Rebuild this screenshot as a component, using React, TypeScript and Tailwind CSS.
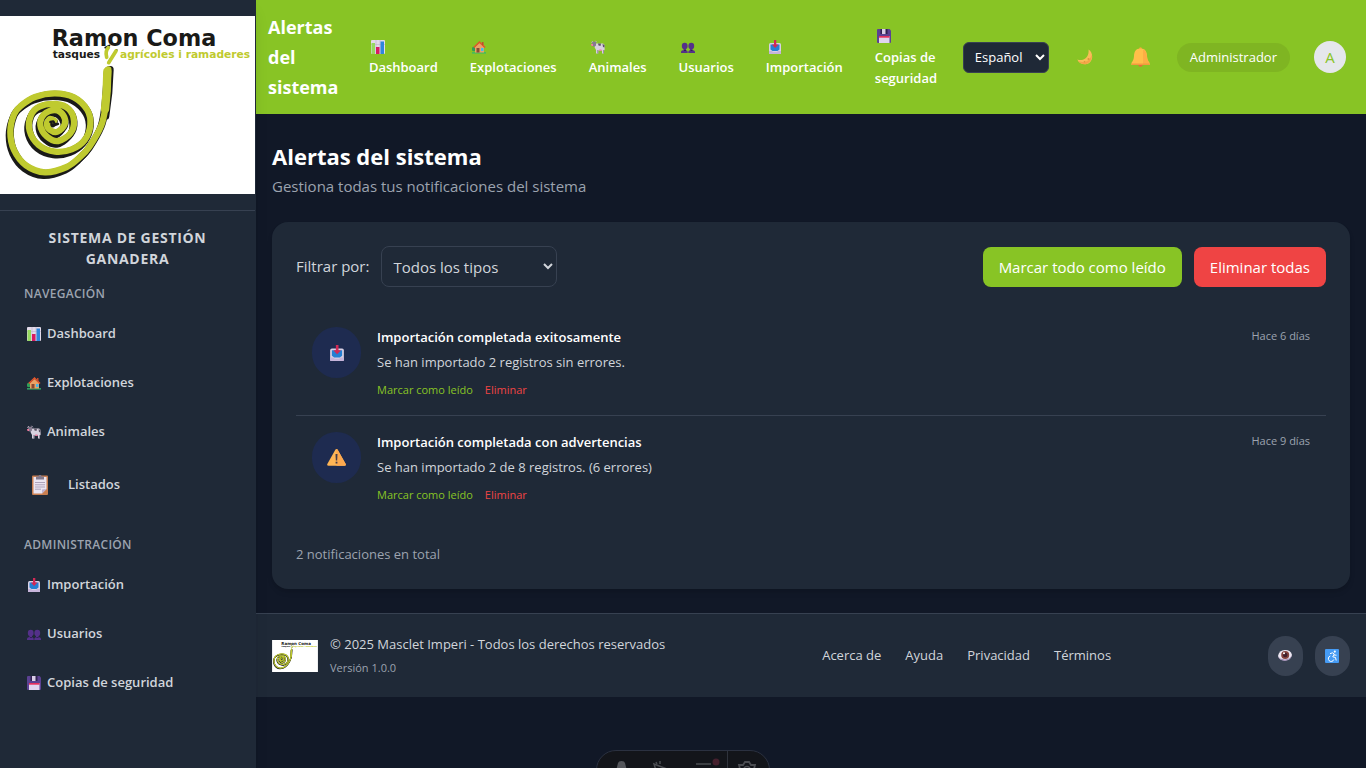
import React from "react";

type Point = [number, number];
type IconProps = { className?: string };

/* Catmull-Rom spline through the given points. */
function smooth(points: Point[]): string {
  let d = `M${points[0][0]} ${points[0][1]}`;
  for (let i = 0; i < points.length - 1; i++) {
    const a = points[Math.max(i - 1, 0)];
    const b = points[i];
    const c = points[i + 1];
    const e = points[Math.min(i + 2, points.length - 1)];
    d += `C${b[0] + (c[0] - a[0]) / 6} ${b[1] + (c[1] - a[1]) / 6} ${c[0] - (e[0] - b[0]) / 6} ${c[1] - (e[1] - b[1]) / 6} ${c[0]} ${c[1]}`;
  }
  return d;
}

const spiral = smooth([
  [325, 160], [322, 210], [316, 275], [303, 330], [268, 392], [240, 423], [200, 453], [135, 469],
  [78, 448], [42, 402], [31, 347], [42, 295], [62, 270], [105, 243], [165, 232], [222, 244],
  [262, 282], [271, 327], [254, 372], [215, 400], [165, 407], [116, 387], [89, 345], [92, 300],
  [118, 272], [168, 264], [206, 279], [222, 315], [211, 352], [175, 375], [141, 362], [121, 328],
  [132, 295], [165, 282], [190, 298], [194, 325], [173, 347], [150, 342], [141, 324],
  [150, 309], [163, 314],
]);

function Logo({ className }: IconProps) {
  return (
    <svg viewBox="0 0 765 534" className={className} role="img" aria-label="Ramon Coma" fontFamily="DejaVu Sans" fontWeight="bold">
      <rect width="765" height="534" fill="#fff" />
      <text x="155" y="91" fontSize="67" fill="#1a1a18">Ramon Coma</text>
      <text x="158" y="125" fontSize="32" fill="#1a1a18">tasques</text>
      <text x="360" y="125" fontSize="32" fill="#bfca2f">agrícoles i ramaderes</text>
      <g fill="none" strokeLinecap="round" strokeLinejoin="round">
        <g stroke="#1a1a18">
          <path d={spiral} strokeWidth="18" transform="translate(-5 11)" />
          <path d={spiral} strokeWidth="21" transform="translate(0 3)" />
          <path d="M330 161L326 230L317 300" strokeWidth="22" />
          <path d="M316 95L328 89M328 135L350 102" strokeWidth="6" />
        </g>
        <g stroke="#bfca2f">
          <path d={spiral} strokeWidth="19" />
          <path d="M322 166L320 225L315 280" strokeWidth="25" />
          <path d="M320 124Q315 105 325 95M326 140L348 105" strokeWidth="11" />
        </g>
        <path d="M151 318L160 316L166 327L174 324" stroke="#1a1a18" strokeWidth="7" />
      </g>
    </svg>
  );
}

function ChartIcon({ className }: IconProps) {
  return (
    <svg viewBox="0 0 14 14" className={className} aria-hidden="true">
      <rect width="14" height="14" rx="1" fill="#e3dbea" />
      <path d="M0 4.5H14M5 0V14M9 0V14" stroke="#bdb2c9" strokeWidth=".6" />
      <rect x=".5" y="3" width="3.5" height="11" fill="#96d95f" />
      <rect x="5" y="7" width="3.5" height="7" fill="#d81b60" />
      <rect x="9.5" y="1.500" width="3.5" height="12.500" fill="#2f86dc" />
    </svg>
  );
}

function HouseIcon({ className }: IconProps) {
  return (
    <svg viewBox="0 0 14 14" className={className} aria-hidden="true">
      <circle cx="2" cy="9" r="2.200" fill="#2f9e57" />
      <path d="M0 12.200H14V13.500H0Z" fill="#35b86b" />
      <path d="M3 7L7.500 3L12 7V12.500H3Z" fill="#e9a367" />
      <path d="M1.800 7.500L7.500 2L13 7.500" fill="none" stroke="#e2552c" strokeWidth="1.600" />
      <path d="M10 2h1.500v3H10Z" fill="#c34a2c" />
      <path d="M4.500 8H7.500V12.500H4.500Z" fill="#8a4a33" />
      <path d="M9 8H11.500V11H9Z" fill="#45b9ec" />
    </svg>
  );
}

function CowIcon({ className }: IconProps) {
  return (
    <svg viewBox="0 0 14 14" className={className} aria-hidden="true">
      <path d="M4 3.500H12Q13.600 3.700 13.600 6V10L12.800 10.500V13.500H11V10.500H7.300V13.500H5V10L3.500 7Z" fill="#d8d1df" />
      <path d="M7 3.500H10L9.500 6L7.500 5.500ZM11.500 4L13.500 5V7.500L12 7Z" fill="#5c5465" />
      <path d="M6.300 10H7.300V13.500H6.300ZM12 10H12.800V13.500H12Z" fill="#8f8599" />
      <path d="M1.300 1.800L5 1.800L5 5.500L3.500 6.800L1 6Z" fill="#857b8f" />
      <path d="M.3 2.500L2 1.300M4.500.8L5.800 2.300" stroke="#b9afc2" strokeWidth="1" />
      <path d="M0 4H2V6H.5Z" fill="#f3799f" />
      <path d="M8.300 9.500H10.500V11H8.300Z" fill="#f3799f" />
    </svg>
  );
}

function UsersIcon({ className }: IconProps) {
  return (
    <svg viewBox="0 0 14 14" className={className} aria-hidden="true">
      <g fill="#54308a">
        <ellipse cx="3.700" cy="6" rx="2.900" ry="3.300" />
        <ellipse cx="10.300" cy="6" rx="2.900" ry="3.300" />
        <path d="M2.500 8H5V10H2.500ZM9 8H11.500V10H9Z" />
        <path d="M0 13V12Q0 10 3.400 10T6.700 12V13ZM7.300 13V12Q7.300 10 10.600 10T14 12V13Z" />
      </g>
      <path d="M3 10H5V11H3ZM9.500 10H11.500V11H9.500Z" fill="#321b5d" />
    </svg>
  );
}

function InboxIcon({ className }: IconProps) {
  return (
    <svg viewBox="0 0 14 14" className={className} aria-hidden="true">
      <rect x="1" y="3" width="12" height="11" rx="1.500" fill="#d9d1e5" />
      <path d="M2.500 4.500H11.500V9.500L9.500 11H4.500L2.500 9.500Z" fill="#257fd3" />
      <path d="M1 11H4L5 12H9L10 11H13V14H1Z" fill="#c6b4da" />
      <path d="M6 0H8.300V4.500H10.500L7.100 8L3.800 4.500H6Z" fill="#d32955" />
    </svg>
  );
}

function FloppyIcon({ className }: IconProps) {
  return (
    <svg viewBox="0 0 14 14" className={className} aria-hidden="true">
      <path d="M1 0H12.500L14 1.500V13Q14 14 13 14H1Q0 14 0 13V1Q0 0 1 0Z" fill="#5b4192" />
      <path d="M3.500 0H10.500V5H3.500Z" fill="#30224f" />
      <path d="M5 0H8.500V5H5Z" fill="#d9cee6" />
      <path d="M2 7H12.500V14H2Z" fill="#e0d5ef" />
      <path d="M2 7H12.500V8.700H2Z" fill="#e5305d" />
    </svg>
  );
}

function ClipboardIcon({ className }: IconProps) {
  return (
    <svg viewBox="0 0 16 20" className={className} aria-hidden="true">
      <rect y=".5" width="16" height="19.500" rx="1" fill="#c97e50" />
      <path d="M1.500 2H14.500V14L10 18.500H1.500Z" fill="#ebe5f2" />
      <path d="M10 18.500V14.500L14.500 14Z" fill="#bfb1cf" />
      <path d="M4 1.500H6.500L7 0H9L9.500 1.500H12V4.500H4Z" fill="#81798c" />
      <path d="M3 7.500H13M3 9.800H13M3 12H13M3 14.200H9" stroke="#a79bb5" strokeWidth=".9" />
    </svg>
  );
}

function MoonIcon({ className }: IconProps) {
  return (
    <svg viewBox="0 0 16 16" className={className} aria-hidden="true">
      <path d="M11.500.5C17.500 4 16 15 8.500 15.300C4.500 15.500 1.500 13.500.3 10.500C6 12.500 12.500 9 11.500.5Z" fill="#f9bd59" />
      <path d="M14.800 5C15.500 10 13 14.500 8.500 15.300C5 15.500 2.500 14 1 12C8 15 14 11 14.800 5Z" fill="#f3a548" />
      <circle cx="11.500" cy="10" r="1" fill="#df913d" />
      <circle cx="7.500" cy="12.700" r=".8" fill="#df913d" />
    </svg>
  );
}

function BellIcon({ className }: IconProps) {
  return (
    <svg viewBox="0 0 19 20" className={className} aria-hidden="true">
      <circle cx="9.500" cy="17.500" r="2.300" fill="#e56b3d" />
      <circle cx="9.500" cy="1.700" r="1.500" fill="#f6a83c" />
      <path d="M9.500 1.500C4.500 1.500 3.200 5 3 9C2.800 13 1.500 14 .5 16V18H18.500V16C17.500 14 16.200 13 16 9C15.800 5 14.500 1.500 9.500 1.500Z" fill="#ffbf4a" />
      <path d="M12 2C14.500 3 15.800 6 16 9C16.200 13 17.500 14 18.500 16V18H12Z" fill="#fcae45" />
      <path d="M.5 16.500H18.500V18H.5Z" fill="#f39a3e" />
    </svg>
  );
}

function WarningIcon({ className }: IconProps) {
  return (
    <svg viewBox="0 0 19 17" className={className} aria-hidden="true">
      <path d="M8.300.8Q9.500-.6 10.700.8L18.700 15Q19.200 16.700 17.500 16.800H1.500Q-.2 16.700.3 15Z" fill="#ffb555" />
      <path d="M9.500 0Q10.200.2 10.700.8L18.700 15Q19.200 16.700 17.500 16.800H9.500Z" fill="#fda94f" />
      <path d="M8.500 5H10.500L10.200 11.500H8.800Z" fill="#433b49" />
      <rect x="8.600" y="12.700" width="1.800" height="1.800" fill="#433b49" />
    </svg>
  );
}

function EyeIcon({ className }: IconProps) {
  return (
    <svg viewBox="0 0 14 11" className={className} aria-hidden="true">
      <path d="M0 6Q1 0 7 0T14 5Q13 10 7 10.500Q1 10 0 6Z" fill="#eee8f3" />
      <path d="M0 6Q1 9 7 9.500Q12 9 14 5Q13 10 7 10.900Q1 10.500 0 6Z" fill="#a592b8" />
      <circle cx="7.200" cy="5" r="4" fill="#86443f" />
      <circle cx="7.200" cy="5" r="2.300" fill="#421f2b" />
      <circle cx="6" cy="3.300" r="1" fill="#fff" />
    </svg>
  );
}

function WheelchairIcon({ className }: IconProps) {
  return (
    <svg viewBox="0 0 14 14" className={className} aria-hidden="true">
      <rect width="14" height="14" rx="1" fill="#469bf4" />
      <circle cx="9.800" cy="2.600" r="1.100" fill="#fff" />
      <path d="M5 4.700L7.500 3.800L9.300 5L7.700 7.800L10.500 8.500L11.200 11.500M5.300 7A2.800 2.800 0 1 0 8.800 10.500M9 6L11.500 6.200" fill="none" stroke="#fff" strokeWidth="1" />
    </svg>
  );
}

type NavEntry = { label: string; Icon: (p: IconProps) => React.JSX.Element };

const dashboard: NavEntry = { label: "Dashboard", Icon: ChartIcon };
const farms: NavEntry = { label: "Explotaciones", Icon: HouseIcon };
const animals: NavEntry = { label: "Animales", Icon: CowIcon };
const users: NavEntry = { label: "Usuarios", Icon: UsersIcon };
const importing: NavEntry = { label: "Importación", Icon: InboxIcon };
const backups: NavEntry = { label: "Copias de seguridad", Icon: FloppyIcon };

function SideLink({ label, Icon }: NavEntry) {
  return (
    <a href="#" className="flex h-[45px] items-center gap-1 px-6">
      <span className="flex w-[19px] justify-center">
        <Icon className="size-3.5" />
      </span>
      {label}
    </a>
  );
}

function SideHeading({ children }: { children: React.ReactNode }) {
  return (
    <h3 className="mb-2 px-6 text-xs leading-[18px] font-semibold tracking-wide text-[#9ca3af] uppercase">{children}</h3>
  );
}

function Sidebar() {
  return (
    <aside className="z-10 w-64 shrink-0 border-r border-[#1f2937] bg-[#1f2937] pt-4 text-[13px] font-semibold text-[#d1d5db] shadow-lg">
      <div className="border-b border-[#374151] pb-4">
        <Logo className="w-full" />
      </div>
      <h2 className="p-4 text-center text-sm leading-[21px] font-bold tracking-wider uppercase">
        Sistema de Gestión Ganadera
      </h2>
      <nav aria-label="Lateral" className="flex flex-col gap-6">
        <section>
          <SideHeading>Navegación</SideHeading>
          <div className="flex flex-col gap-1">
            {[dashboard, farms, animals].map((e) => (
              <SideLink key={e.label} {...e} />
            ))}
            <a href="#" className="flex h-[54px] items-center gap-5 px-8">
              <ClipboardIcon className="h-5 w-4" />
              Listados
            </a>
          </div>
        </section>
        <section>
          <SideHeading>Administración</SideHeading>
          <div className="flex flex-col gap-1">
            {[importing, users, backups].map((e) => (
              <SideLink key={e.label} {...e} />
            ))}
          </div>
        </section>
      </nav>
    </aside>
  );
}

function TopBar() {
  return (
    <header className="flex items-center justify-between bg-[#88c425] py-3 pr-5 pl-3 text-white">
      <div className="w-[76px] text-lg leading-[30px] font-bold">Alertas del sistema</div>
      <div className="flex items-center">
        <nav aria-label="Principal" className="flex items-center gap-2">
          {[dashboard, farms, animals, users, importing, backups].map(({ label, Icon }) => (
            <a key={label} href="#" className="max-w-[88px] min-w-min px-3 text-[13px] leading-[21px] font-semibold">
              <span className="flex h-[21px] items-center px-0.5">
                <Icon className="size-3.5" />
              </span>
              {label}
            </a>
          ))}
        </nav>
        <select
          aria-label="Idioma"
          defaultValue="es"
          className="ml-3 h-[31px] w-[86px] rounded-md border border-[#374151] bg-[#1f2937] px-[7px] text-[13px] text-white"
        >
          <option value="es">Español</option>
          <option value="ca">Català</option>
        </select>
        <button type="button" aria-label="Cambiar tema" className="ml-4 flex size-10 items-center justify-center">
          <MoonIcon className="size-4" />
        </button>
        <button type="button" aria-label="Notificaciones" className="ml-4 flex size-10 items-center justify-center">
          <BellIcon className="h-5 w-[19px]" />
        </button>
        <span className="ml-4 rounded-full bg-[#7fb522] px-[13px] py-1 text-[13px] leading-[21px]">Administrador</span>
        <button
          type="button"
          aria-label="Perfil"
          className="ml-6 flex size-8 items-center justify-center rounded-full bg-[#e5e7eb] text-[15px] text-[#88c425]"
        >
          A
        </button>
      </div>
    </header>
  );
}

const alerts = [
  {
    title: "Importación completada exitosamente",
    text: "Se han importado 2 registros sin errores.",
    age: "Hace 6 días",
    icon: <InboxIcon className="h-[18px] w-4" />,
  },
  {
    title: "Importación completada con advertencias",
    text: "Se han importado 2 de 8 registros. (6 errores)",
    age: "Hace 9 días",
    icon: <WarningIcon className="h-[17px] w-[19px]" />,
  },
];

function AlertsPanel() {
  return (
    <section className="rounded-2xl bg-[#1f2937] p-6 shadow-md">
      <div className="mb-6 flex items-center justify-between text-[15px]">
        <div className="flex items-center gap-3">
          <label htmlFor="kind" className="text-[#d1d5db]">Filtrar por:</label>
          <select
            id="kind"
            className="h-[41px] w-44 rounded-lg border border-[#374151] bg-[#1f2937] px-[7px] text-[#d1d5db]"
          >
            <option>Todos los tipos</option>
            <option>Importación</option>
          </select>
        </div>
        <div className="flex gap-3 leading-6 text-white">
          <button type="button" className="rounded-lg bg-[#88c425] px-4 py-2">Marcar todo como leído</button>
          <button type="button" className="rounded-lg bg-[#ef4444] px-4 py-2">Eliminar todas</button>
        </div>
      </div>
      <ul className="divide-y divide-[#374151]">
        {alerts.map((a) => (
          <li key={a.title} className="flex items-start gap-4 p-4">
            <span className="flex h-[51px] w-[49px] shrink-0 items-center justify-center rounded-full bg-[#1e2b50]">{a.icon}</span>
            <div className="grow text-[13px] leading-[21px]">
              <h3 className="font-semibold text-white">{a.title}</h3>
              <p className="mt-1 text-[#d1d5db]">{a.text}</p>
              <div className="mt-2 flex gap-3 text-[11px] leading-[18px]">
                <button type="button" className="text-[#88c425]">Marcar como leído</button>
                <button type="button" className="text-[#ef4444]">Eliminar</button>
              </div>
            </div>
            <time className="text-[11px] leading-[18px] text-[#9ca3af]">{a.age}</time>
          </li>
        ))}
      </ul>
      <p className="mt-6 text-[13px] leading-[21px] text-[#9ca3af]">2 notificaciones en total</p>
    </section>
  );
}

function Footer() {
  return (
    <footer className="flex items-center justify-between border-t border-[#374151] bg-[#1f2937] px-4 py-5 text-[13px] leading-[21px] text-[#d1d5db]">
      <div className="flex items-center gap-3">
        <Logo className="h-8 w-[46px]" />
        <div>
          <p>© 2025 Masclet Imperi - Todos los derechos reservados</p>
          <p className="mt-1 text-[11px] leading-[18px] text-[#9ca3af]">Versión 1.0.0</p>
        </div>
      </div>
      <nav aria-label="Pie" className="flex gap-6">
        {["Acerca de", "Ayuda", "Privacidad", "Términos"].map((l) => (
          <a key={l} href="#">{l}</a>
        ))}
      </nav>
      <div className="flex gap-3">
        <button type="button" aria-label="Alto contraste" className="flex h-10 w-[35px] items-center justify-center rounded-full bg-[#374151]">
          <EyeIcon className="h-[11px] w-3.5" />
        </button>
        <button type="button" aria-label="Accesibilidad" className="flex h-10 w-[35px] items-center justify-center rounded-full bg-[#374151]">
          <WheelchairIcon className="size-3.5" />
        </button>
      </div>
    </footer>
  );
}

function DevToolbar() {
  return (
    <div className="fixed -bottom-[22px] left-1/2 z-20 flex h-10 w-[174px] -translate-x-1/2 overflow-hidden rounded-full border border-[#2b3140] bg-[#13151a]">
      <svg viewBox="0 0 172 38" className="w-full" aria-hidden="true">
        <path d="M18 24L21 12Q21.500 10 24.500 10T28 12L31 24" fill="#54565b" />
        <path d="M57 13L70 18L64 20L61 26ZM59 11L60 13M63 10V13" fill="none" stroke="#4b4d52" strokeWidth="1.500" />
        <path d="M99 13H114M99 19H114" stroke="#4b4d52" strokeWidth="1.500" />
        <circle cx="119" cy="11" r="3.500" fill="#45202d" />
        <path d="M130.500 0V38" stroke="#2f333c" />
        <path d="M141 20L143 18L142 14L146 14L148 11H152L154 14L158 14L157 18L159 20" fill="none" stroke="#4b4d52" strokeWidth="1.800" />
        <circle cx="150" cy="19" r="3.500" fill="none" stroke="#4b4d52" strokeWidth="1.500" />
      </svg>
    </div>
  );
}

export default function App() {
  return (
    <div className="flex min-h-screen bg-[#111827] font-['Open_Sans','Noto_Sans',sans-serif]">
      <Sidebar />
      <div className="min-w-0 grow">
        <TopBar />
        <main className="px-4 py-6">
          <h1 className="text-[22px] leading-9 font-bold text-white">Alertas del sistema</h1>
          <p className="mb-6 text-[15px] leading-6 text-[#9ca3af]">Gestiona todas tus notificaciones del sistema</p>
          <AlertsPanel />
        </main>
        <Footer />
      </div>
      <DevToolbar />
    </div>
  );
}
